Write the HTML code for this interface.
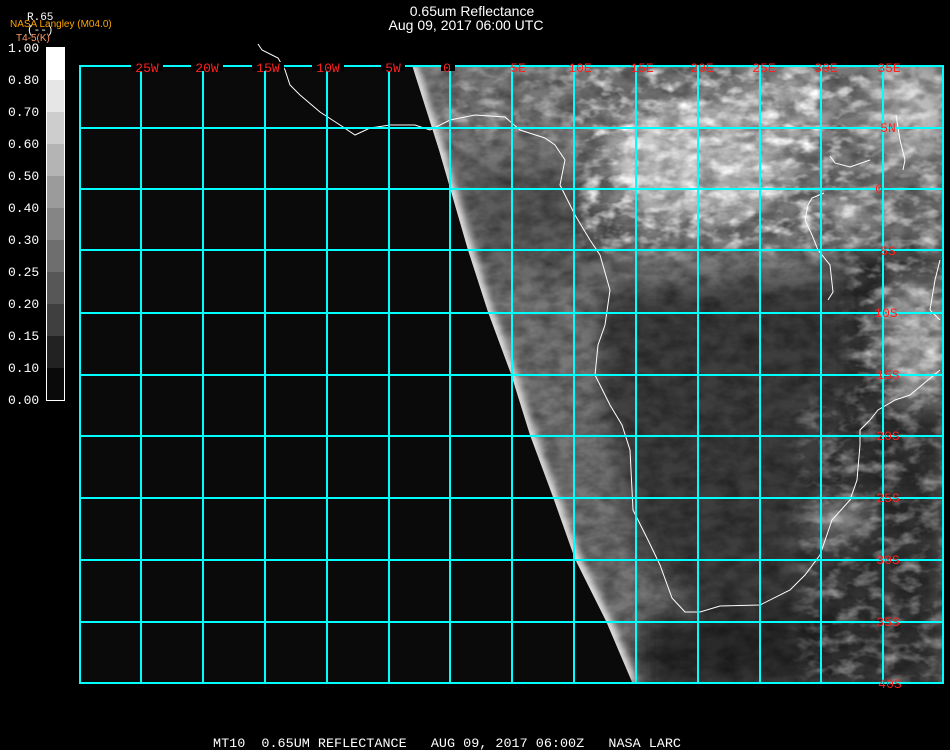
<!DOCTYPE html>
<html><head><meta charset="utf-8"><style>
html,body{margin:0;padding:0;background:#000;width:950px;height:750px;overflow:hidden}
svg{display:block}
</style></head><body>
<svg width="950" height="750" viewBox="0 0 950 750" xmlns="http://www.w3.org/2000/svg" font-family="Liberation Sans, sans-serif">
<defs>
<clipPath id="land"><path d="M412,65 L439,150 L468,250 L488,312 L511,374 L530,435 L553,497 L575,559 L606,621 L632,682 L943,682 L943,65 Z"/></clipPath>
<filter id="noise" filterUnits="userSpaceOnUse" x="400" y="60" width="550" height="630">
<feTurbulence type="fractalNoise" baseFrequency="0.05 0.08" numOctaves="3" seed="4"/>
<feColorMatrix type="matrix" values="0 0 0 0 0  0 0 0 0 0  0 0 0 0 0  1.6 0 0 0 -0.5"/>
</filter>
<filter id="noise2" filterUnits="userSpaceOnUse" x="400" y="60" width="550" height="630">
<feTurbulence type="fractalNoise" baseFrequency="0.05 0.08" numOctaves="3" seed="11"/>
<feColorMatrix type="matrix" values="0 0 0 0 1  0 0 0 0 1  0 0 0 0 1  2.4 0 0 0 -1.1"/>
</filter>
<filter id="blur" filterUnits="userSpaceOnUse" x="300" y="0" width="700" height="750"><feGaussianBlur stdDeviation="12"/></filter>
<filter id="blur2" filterUnits="userSpaceOnUse" x="300" y="0" width="700" height="750"><feGaussianBlur stdDeviation="4"/></filter>
<mask id="cloudmask" maskUnits="userSpaceOnUse" x="0" y="0" width="950" height="750">
<g filter="url(#blur)">
<rect x="440" y="60" width="520" height="80" fill="#888"/>
<rect x="580" y="60" width="370" height="190" fill="#fff"/>
<rect x="850" y="60" width="100" height="630" fill="#aaa"/>
<rect x="800" y="400" width="150" height="290" fill="#777"/>
</g>
</mask>
</defs>
<rect x="80" y="65" width="863" height="618" fill="#0a0a0a"/>
<g clip-path="url(#land)">
<rect x="400" y="65" width="550" height="620" fill="#777"/>
<g filter="url(#blur)">
<path d="M600,290 L860,280 L880,600 L700,615 L640,560 L615,450 L600,380 Z" fill="#3c3c3c"/>
<path d="M640,620 L880,600 L943,690 L640,690 Z" fill="#2c2c2c"/>
<path d="M470,170 L600,170 L620,250 L560,280 L480,250 Z" fill="#5a5a5a"/>
<path d="M840,250 L943,250 L943,690 L840,690 Z" fill="#333"/>
<ellipse cx="700" cy="160" rx="90" ry="60" fill="#c8c8c8"/>
<ellipse cx="780" cy="110" rx="50" ry="40" fill="#aaa"/>
<ellipse cx="910" cy="110" rx="40" ry="50" fill="#bbb"/>
<ellipse cx="915" cy="340" rx="30" ry="60" fill="#aaa"/>
<ellipse cx="845" cy="212" rx="12" ry="12" fill="#fff"/>
<ellipse cx="840" cy="520" rx="25" ry="15" fill="#999"/>
</g>
<rect x="400" y="65" width="550" height="620" filter="url(#noise)" opacity="0.45"/>
<rect x="400" y="65" width="550" height="620" filter="url(#noise2)" mask="url(#cloudmask)"/>
<path d="M412,65 L439,150 L468,250 L488,312 L511,374 L530,435 L553,497 L575,559 L606,621 L632,682" fill="none" stroke="#fff" stroke-width="10" filter="url(#blur2)" opacity="0.9"/>
</g>
<!-- coastlines -->
<g fill="none" stroke="#fff" stroke-width="1">
<polyline points="258,44 262,50 278,58 285,70 290,85 300,95 320,112 340,125 355,135 370,128 390,125 415,125 430,130 450,120 475,115 505,117 520,130 545,138 555,145 565,160 560,185 575,215 590,240 600,255 610,290 605,325 598,345 595,375 610,405 622,425 630,450 632,490 633,510 648,540 660,565 672,598 685,612 700,612 720,606 760,605 790,590 805,575 820,555 832,520 850,500 857,480 860,445 860,430 870,420 878,410 895,400 910,395 940,370"/>
<polyline points="830,156 835,163 850,167 870,160"/>
<polyline points="808,205 812,198 824,193"/>
<polyline points="808,205 805,220 812,235 818,250 830,265 833,292 828,300"/>
<polyline points="896,115 900,140 905,160 903,170"/>
<polyline points="940,260 935,280 930,310 940,320"/>
</g>
<!-- grid -->
<g fill="#00ffff">
<rect x="80" y="65" width="864" height="2"/><rect x="80" y="682" width="864" height="2"/>
<rect x="79" y="65" width="2" height="619"/><rect x="942" y="65" width="2" height="619"/>
<rect x="140" y="65" width="2" height="618"/><rect x="202" y="65" width="2" height="618"/><rect x="264" y="65" width="2" height="618"/><rect x="326" y="65" width="2" height="618"/><rect x="388" y="65" width="2" height="618"/><rect x="449" y="65" width="2" height="618"/><rect x="511" y="65" width="2" height="618"/><rect x="573" y="65" width="2" height="618"/><rect x="635" y="65" width="2" height="618"/><rect x="697" y="65" width="2" height="618"/><rect x="759" y="65" width="2" height="618"/><rect x="820" y="65" width="2" height="618"/><rect x="882" y="65" width="2" height="618"/>
<rect x="80" y="127" width="863" height="2"/><rect x="80" y="188" width="863" height="2"/><rect x="80" y="249" width="863" height="2"/><rect x="80" y="312" width="863" height="2"/><rect x="80" y="374" width="863" height="2"/><rect x="80" y="435" width="863" height="2"/><rect x="80" y="497" width="863" height="2"/><rect x="80" y="559" width="863" height="2"/><rect x="80" y="621" width="863" height="2"/>
</g>
<!-- labels -->
<g fill="#000">
<rect x="131" y="62" width="32" height="9"/><rect x="191" y="62" width="32" height="9"/><rect x="252" y="62" width="32" height="9"/><rect x="312" y="62" width="32" height="9"/><rect x="381" y="62" width="24" height="9"/><rect x="441" y="62" width="14" height="9"/>
</g>
<g font-family="Liberation Mono, monospace" font-size="13" fill="#ff2020" text-anchor="middle">
<text x="147" y="72">25W</text><text x="207" y="72">20W</text><text x="268" y="72">15W</text><text x="328" y="72">10W</text><text x="393" y="72">5W</text><text x="447" y="72">0</text><text x="518" y="72">5E</text><text x="580" y="72">10E</text><text x="642" y="72">15E</text><text x="702" y="72">20E</text><text x="764" y="72">25E</text><text x="826" y="72">30E</text><text x="889" y="72">35E</text>
<text x="888" y="132">5N</text><text x="879" y="193">0</text><text x="888" y="255">5S</text><text x="886" y="317">10S</text><text x="888" y="379">15S</text><text x="888" y="440">20S</text><text x="888" y="502">25S</text><text x="888" y="564">30S</text><text x="888" y="626">35S</text><text x="890" y="688">40S</text>
</g>
<!-- title -->
<text x="472" y="16" font-size="14" fill="#fff" text-anchor="middle">0.65um Reflectance</text>
<text x="466" y="30" font-size="14" fill="#fff" text-anchor="middle">Aug 09, 2017 06:00 UTC</text>
<!-- legend -->
<text x="27" y="20" font-size="11" fill="#fff" font-family="Liberation Mono, monospace">R.65</text>
<text x="27" y="33" font-size="11" fill="#fff" font-family="Liberation Mono, monospace">(--)</text>
<text x="10" y="27" font-size="10" fill="#ffa500">NASA Langley (M04.0)</text>
<text x="16" y="41" font-size="10" fill="#ff9966">T4-5(K)</text>
<g>
<rect x="46" y="47" width="19" height="33" fill="#fff"/>
<rect x="46" y="80" width="19" height="32" fill="#e6e6e6"/>
<rect x="46" y="112" width="19" height="32" fill="#cdcdcd"/>
<rect x="46" y="144" width="19" height="32" fill="#b4b4b4"/>
<rect x="46" y="176" width="19" height="32" fill="#9b9b9b"/>
<rect x="46" y="208" width="19" height="32" fill="#858585"/>
<rect x="46" y="240" width="19" height="32" fill="#6e6e6e"/>
<rect x="46" y="272" width="19" height="32" fill="#575757"/>
<rect x="46" y="304" width="19" height="32" fill="#3f3f3f"/>
<rect x="46" y="336" width="19" height="32" fill="#222"/>
<rect x="46" y="368" width="19" height="32" fill="#0a0a0a"/>
<rect x="46.5" y="47.5" width="18" height="353" fill="none" stroke="#fff" stroke-width="1"/>
</g>
<g font-family="Liberation Mono, monospace" font-size="13" fill="#fff">
<text x="8" y="52">1.00</text><text x="8" y="84">0.80</text><text x="8" y="116">0.70</text><text x="8" y="148">0.60</text><text x="8" y="180">0.50</text><text x="8" y="212">0.40</text><text x="8" y="244">0.30</text><text x="8" y="276">0.25</text><text x="8" y="308">0.20</text><text x="8" y="340">0.15</text><text x="8" y="372">0.10</text><text x="8" y="404">0.00</text>
</g>
<text x="213" y="747" font-family="Liberation Mono, monospace" font-size="13" fill="#fff" textLength="468" lengthAdjust="spacingAndGlyphs" xml:space="preserve">MT10  0.65UM REFLECTANCE   AUG 09, 2017 06:00Z   NASA LARC</text>
</svg>
</body></html>
